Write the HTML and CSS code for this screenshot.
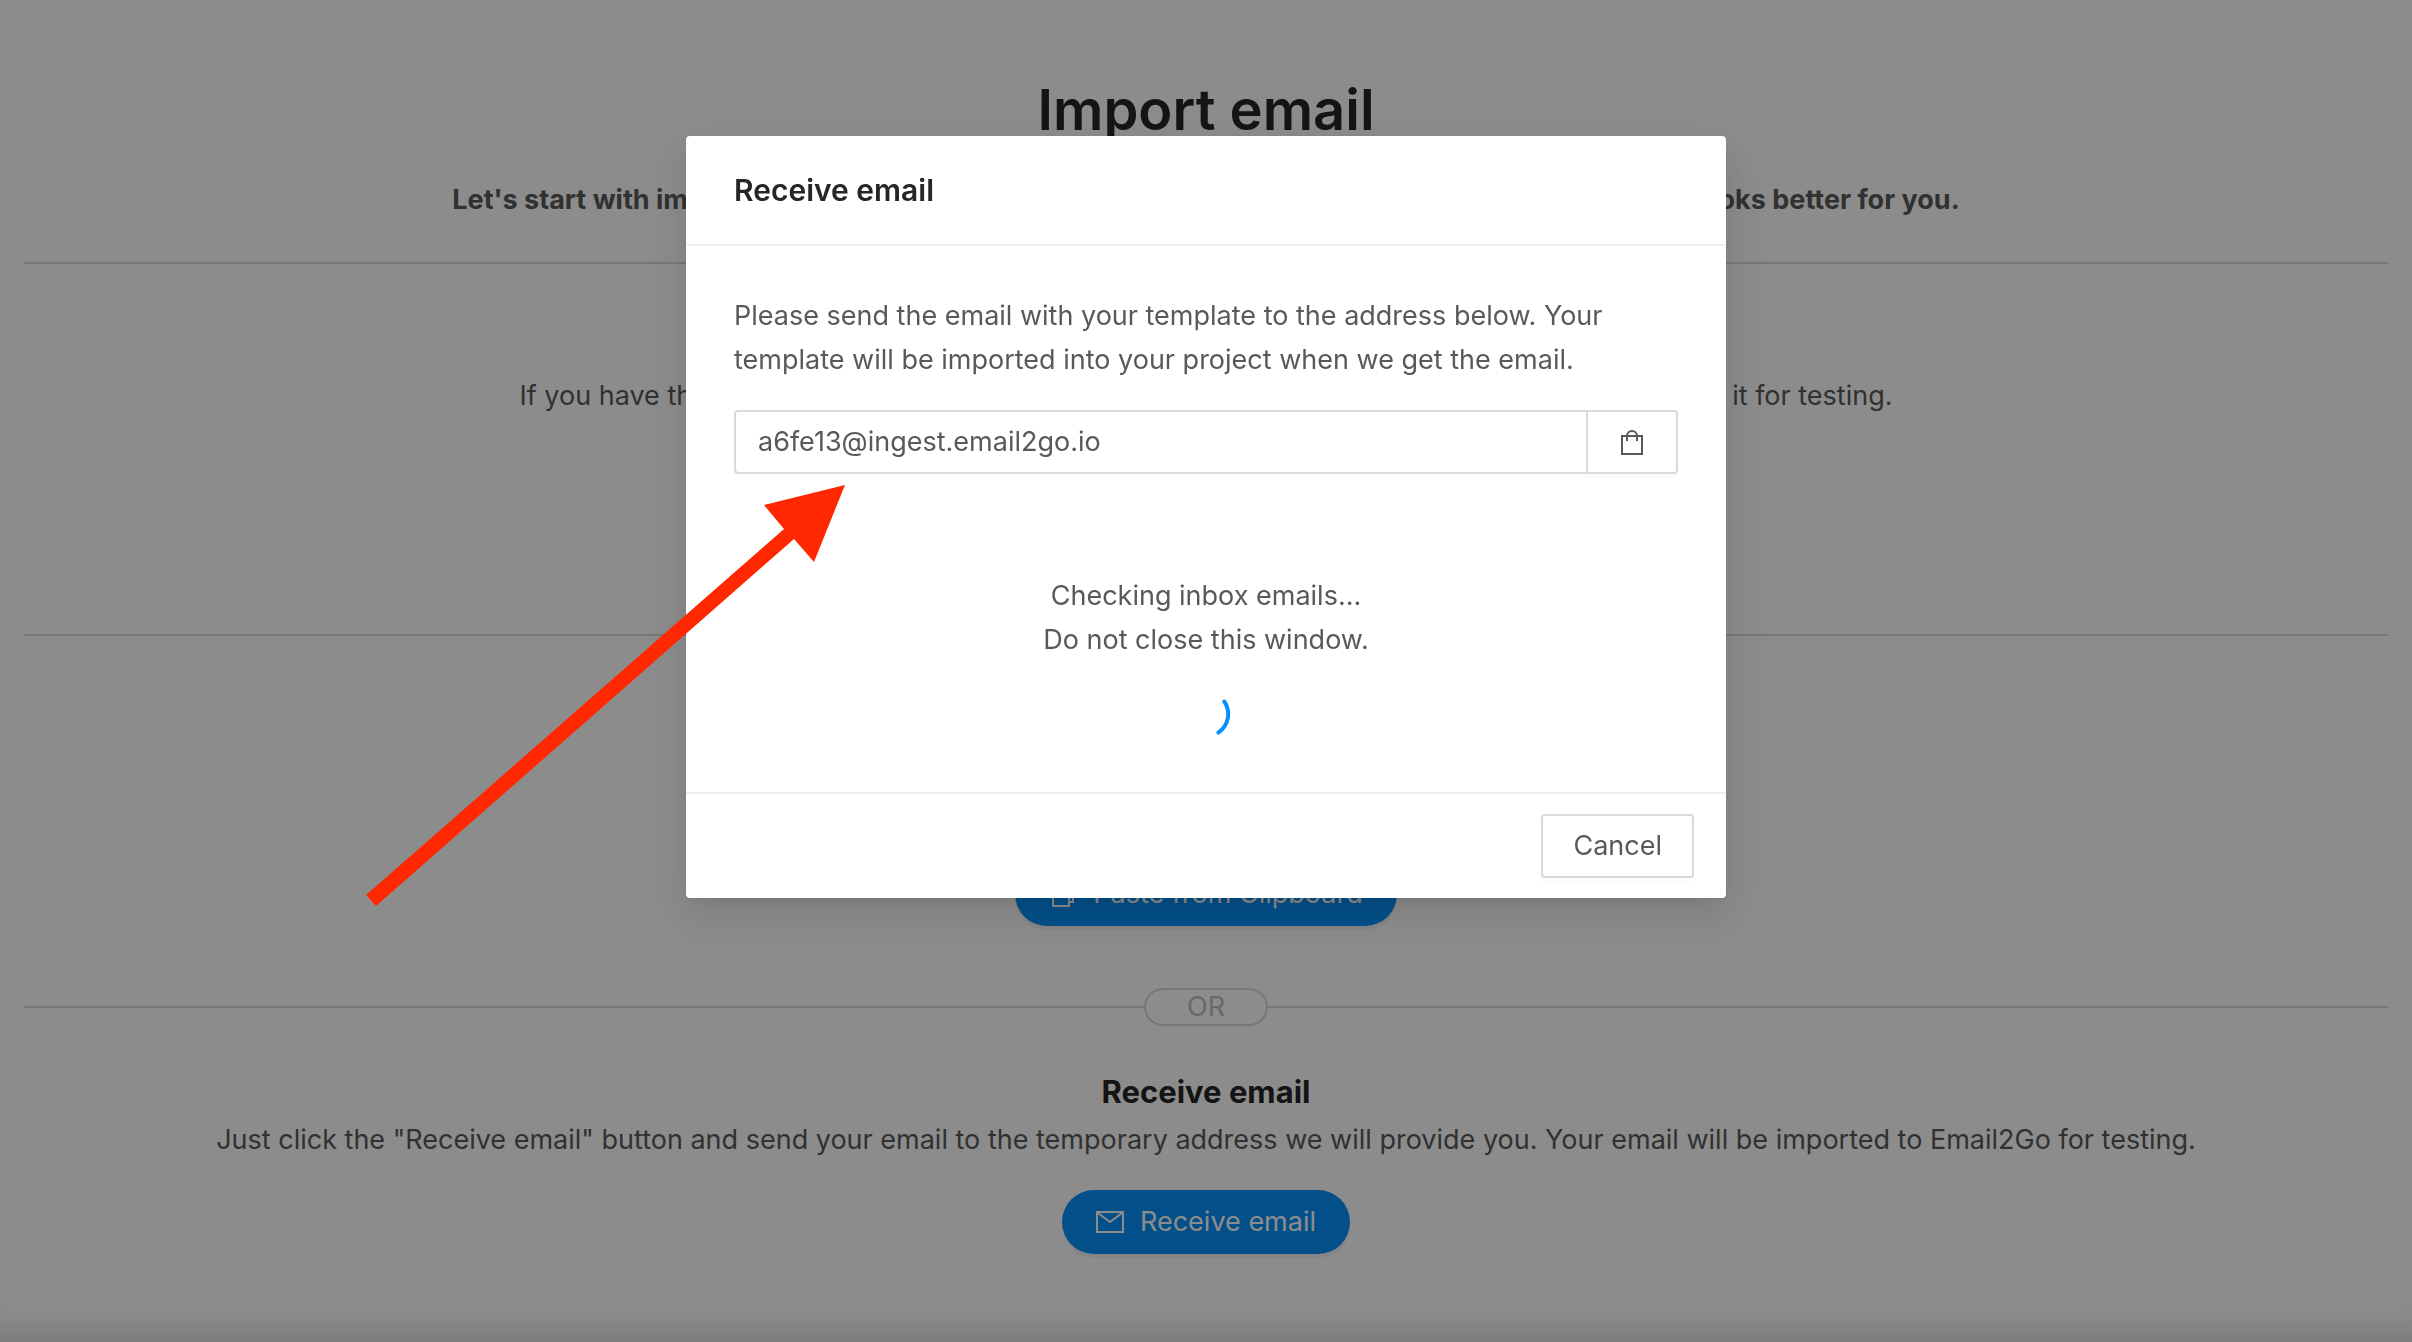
FILE: index.html
```
<!DOCTYPE html>
<html lang="en">
<head>
    <meta charset="UTF-8">
    <meta name="viewport" content="width=device-width, initial-scale=1.0">
    <title>Import email</title>
    <link rel="stylesheet" href="styles.css">
</head>
<body>

    <main class="page">
        <h1>Import email</h1>
        <p class="lead">Let's start with importing your email. There are several easy ways to do it, choose the one that looks better for you.</p>

        <div class="divider"></div>

        <section class="option">
            <h2>Upload file</h2>
            <p>If you have the email template saved as a file on your computer, upload it here and we'll import it for testing.<br>Supported formats: .html, .eml</p>
            <button type="button" class="btn-primary">Upload file</button>
        </section>

        <div class="divider"><span>OR</span></div>

        <section class="option">
            <h2>Paste HTML</h2>
            <p>Copy the HTML code of your email template<br>and paste it from the clipboard.</p>
            <button type="button" class="btn-primary">
                <svg class="icon" viewBox="0 0 28 28" aria-hidden="true">
                    <path d="M4 8h16v18H4zM8 8V3h16v19h-4"/>
                </svg>
                Paste from Clipboard
            </button>
        </section>

        <div class="divider"><span>OR</span></div>

        <section class="option">
            <h2>Receive email</h2>
            <p>Just click the "Receive email" button and send your email to the temporary address we will provide you. Your email will be imported to Email2Go for testing.</p>
            <button type="button" class="btn-primary">
                <svg class="icon" viewBox="0 0 28 28" aria-hidden="true">
                    <path d="M1 4h26v20H1zM2 5l12 9 12-9"/>
                </svg>
                Receive email
            </button>
        </section>
    </main>

    <div class="overlay">
        <div class="modal" role="dialog" aria-labelledby="modalTitle">
            <div class="modal-header">
                <h3 id="modalTitle">Receive email</h3>
            </div>
            <div class="modal-body">
                <label for="address">Please send the email with your template to the address below. Your template will be imported into your project when we get the email.</label>
                <div class="address">
                    <input type="text" id="address" value="a6fe13@ingest.email2go.io" readonly>
                    <button type="button" aria-label="Copy address">
                        <svg class="icon" viewBox="0 0 28 28" aria-hidden="true">
                            <path d="M4 8h20v18H4zM9 13V8a5 5 0 0 1 10 0v5"/>
                        </svg>
                    </button>
                </div>
                <p class="status">Checking inbox emails...<br>Do not close this window.</p>
                <svg class="spinner" viewBox="0 0 48 48" aria-hidden="true">
                    <path d="M42.300 11.500A22.300 22.300 0 0 1 36.500 42.500"/>
                </svg>
            </div>
            <div class="modal-footer">
                <button type="button" class="btn-default">Cancel</button>
            </div>

            <svg class="arrow" viewBox="0 0 481 423" aria-hidden="true">
                <path d="M480 1L399 21L419 45L1 411L11 422L429 55L449 78Z"/>
            </svg>
        </div>
    </div>

</body>
</html>
```
FILE: styles.css
```
* {
    box-sizing: border-box;
}

body {
    margin: 0;
    min-height: 100vh;
    font-family: Inter, "Liberation Sans", sans-serif;
    font-size: 27px;
    line-height: 44px;
    color: #595959;
    background-color: #fff;
}

h1, h2, h3, p {
    margin: 0;
}

.page {
    padding: 74px 24px 0;
    text-align: center;
}

h1 {
    font-size: 56px;
    line-height: 72px;
    font-weight: 600;
    color: #262626;
}

.lead {
    margin-top: 32px;
    font-weight: 700;
}

h2 {
    margin-bottom: 4px;
    font-size: 31px;
    font-weight: 700;
    color: #262626;
}

/* line with an optional pill in the middle */
.divider {
    display: flex;
    align-items: center;
    height: 38px;
    margin: 62px 0 44px;
}

.lead + .divider {
    margin-top: 22px;
}

.divider::before,
.divider::after {
    content: "";
    flex: 1;
    height: 2px;
    background-color: #d9d9d9;
}

.divider span {
    width: 124px;
    border: 2px solid #d9d9d9;
    border-radius: 20px;
    line-height: 34px;
    color: #bfbfbf;
}

button, input {
    font: inherit;
    color: inherit;
}

button {
    cursor: pointer;
}

.icon {
    width: 28px;
    height: 28px;
    fill: none;
    stroke: currentColor;
    stroke-width: 2;
}

.btn-primary {
    display: inline-flex;
    align-items: center;
    gap: 16px;
    height: 64px;
    margin-top: 28px;
    padding: 0 34px;
    border: none;
    border-radius: 32px;
    color: #fff;
    background-color: #0690fb;
    box-shadow: 0 4px 0 rgba(0, 0, 0, 0.045);
    vertical-align: top;
}

.overlay {
    position: fixed;
    inset: 0;
    display: flex;
    justify-content: center;
    align-items: flex-start;
    padding-top: 136px;
    background-color: rgba(0, 0, 0, 0.45);
    box-shadow: inset 0 -40px 40px -36px rgba(0, 0, 0, 0.2);
}

.modal {
    position: relative;
    width: 1040px;
    background-color: #fff;
    border-radius: 4px;
    box-shadow: 0 6px 12px -8px rgba(0, 0, 0, 0.12), 0 12px 32px rgba(0, 0, 0, 0.08), 0 18px 56px 16px rgba(0, 0, 0, 0.05);
}

.modal-header {
    padding: 32px 48px;
    border-bottom: 2px solid #f0f0f0;
}

h3 {
    font-size: 30px;
    font-weight: 600;
    color: #262626;
}

.modal-body {
    display: flex;
    flex-direction: column;
    padding: 48px 48px 54px;
}

.address {
    display: flex;
    height: 64px;
    margin-top: 28px;
}

.address input {
    flex: 1;
    min-width: 0;
    padding: 0 22px;
    border: 2px solid #d9d9d9;
    border-right: none;
    border-radius: 4px 0 0 4px;
    outline: none;
}

.address button {
    display: flex;
    align-items: center;
    justify-content: center;
    width: 92px;
    border: 2px solid #d9d9d9;
    border-radius: 0 4px 4px 0;
    background-color: #fff;
    box-shadow: 0 4px 0 rgba(0, 0, 0, 0.015);
}

.status {
    margin: 100px 0 28px;
    text-align: center;
}

.spinner {
    width: 48px;
    height: 48px;
    align-self: center;
    fill: none;
    stroke: #0690fb;
    stroke-width: 4;
    stroke-linecap: round;
}

.modal-footer {
    display: flex;
    justify-content: flex-end;
    padding: 20px 32px;
    border-top: 2px solid #f0f0f0;
}

.btn-default {
    height: 64px;
    padding: 0 30px;
    border: 2px solid #d9d9d9;
    border-radius: 4px;
    background-color: #fff;
    box-shadow: 0 4px 0 rgba(0, 0, 0, 0.015);
}

/* pointer drawn over the dialog and the page behind it */
.arrow {
    position: absolute;
    top: 348px;
    left: -321px;
    width: 481px;
    height: 423px;
    fill: #ff2800;
    pointer-events: none;
}
```
